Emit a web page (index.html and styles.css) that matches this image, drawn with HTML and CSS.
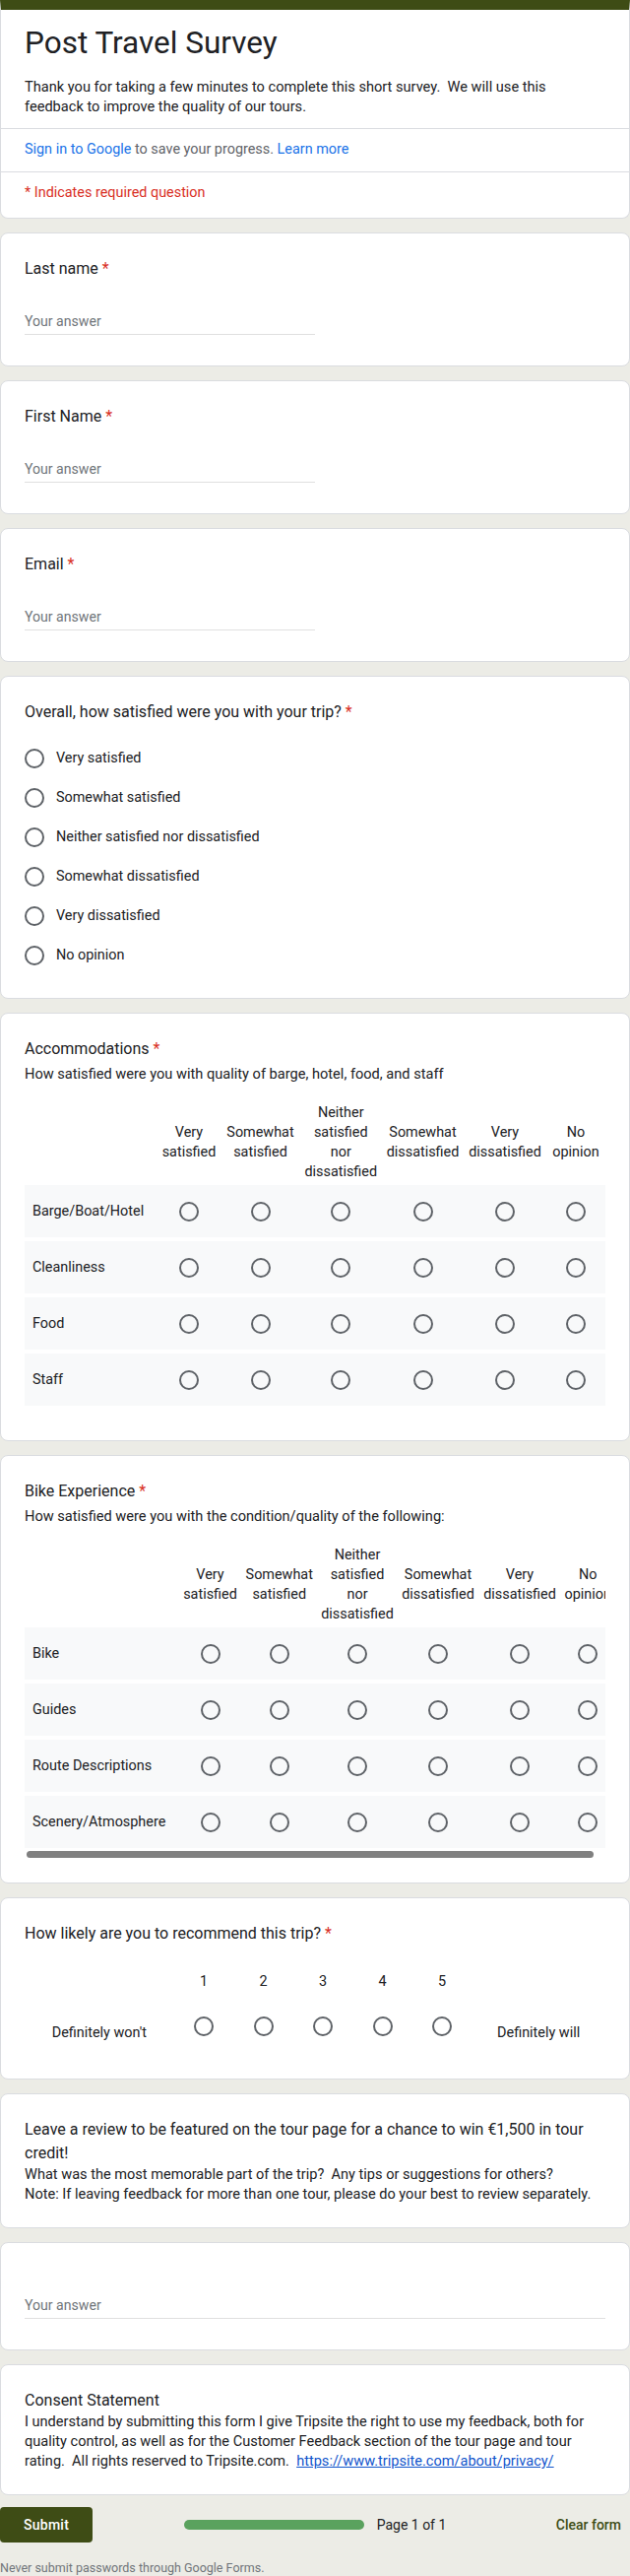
FILE: index.html
```html
<!DOCTYPE html>
<html lang="en">
<head>
<meta charset="utf-8">
<title>Post Travel Survey</title>
<link rel="stylesheet" href="styles.css">
</head>
<body>
<div class="page">

  <div class="card header-card">
    <div class="header-main">
      <h1 class="form-title">Post Travel Survey</h1>
      <div class="form-desc">Thank you for taking a few minutes to complete this short survey.&nbsp; We will use this<br>feedback to improve the quality of our tours.</div>
    </div>
    <div class="header-row signin"><a class="link">Sign in to Google</a> to save your progress. <a class="link">Learn more</a></div>
    <div class="header-row required-note">* Indicates required question</div>
  </div>

  <div class="card">
    <div class="q-title">Last name <span class="req">*</span></div>
    <div class="answer">Your answer</div>
  </div>

  <div class="card">
    <div class="q-title">First Name <span class="req">*</span></div>
    <div class="answer">Your answer</div>
  </div>

  <div class="card">
    <div class="q-title">Email <span class="req">*</span></div>
    <div class="answer">Your answer</div>
  </div>

  <div class="card card-options">
    <div class="q-title">Overall, how satisfied were you with your trip? <span class="req">*</span></div>
    <div class="options">
      <div class="option"><span class="radio"></span><span>Very satisfied</span></div>
      <div class="option"><span class="radio"></span><span>Somewhat satisfied</span></div>
      <div class="option"><span class="radio"></span><span>Neither satisfied nor dissatisfied</span></div>
      <div class="option"><span class="radio"></span><span>Somewhat dissatisfied</span></div>
      <div class="option"><span class="radio"></span><span>Very dissatisfied</span></div>
      <div class="option"><span class="radio"></span><span>No opinion</span></div>
    </div>
  </div>

  <div class="card">
    <div class="q-title">Accommodations <span class="req">*</span></div>
    <div class="q-desc">How satisfied were you with quality of barge, hotel, food, and staff</div>
    <div class="grid-scroll">
      <div class="grid grid-accom">
        <div class="grid-head">
          <div></div>
          <div>Very<br>satisfied</div>
          <div>Somewhat<br>satisfied</div>
          <div>Neither<br>satisfied<br>nor<br>dissatisfied</div>
          <div>Somewhat<br>dissatisfied</div>
          <div>Very<br>dissatisfied</div>
          <div>No<br>opinion</div>
        </div>
        <div class="grid-row"><div class="row-label">Barge/Boat/Hotel</div><div class="cell"><span class="radio"></span></div><div class="cell"><span class="radio"></span></div><div class="cell"><span class="radio"></span></div><div class="cell"><span class="radio"></span></div><div class="cell"><span class="radio"></span></div><div class="cell"><span class="radio"></span></div></div>
        <div class="grid-row"><div class="row-label">Cleanliness</div><div class="cell"><span class="radio"></span></div><div class="cell"><span class="radio"></span></div><div class="cell"><span class="radio"></span></div><div class="cell"><span class="radio"></span></div><div class="cell"><span class="radio"></span></div><div class="cell"><span class="radio"></span></div></div>
        <div class="grid-row"><div class="row-label">Food</div><div class="cell"><span class="radio"></span></div><div class="cell"><span class="radio"></span></div><div class="cell"><span class="radio"></span></div><div class="cell"><span class="radio"></span></div><div class="cell"><span class="radio"></span></div><div class="cell"><span class="radio"></span></div></div>
        <div class="grid-row"><div class="row-label">Staff</div><div class="cell"><span class="radio"></span></div><div class="cell"><span class="radio"></span></div><div class="cell"><span class="radio"></span></div><div class="cell"><span class="radio"></span></div><div class="cell"><span class="radio"></span></div><div class="cell"><span class="radio"></span></div></div>
      </div>
    </div>
    <div class="scrollbar"></div>
  </div>

  <div class="card">
    <div class="q-title">Bike Experience <span class="req">*</span></div>
    <div class="q-desc">How satisfied were you with the condition/quality of the following:</div>
    <div class="grid-scroll">
      <div class="grid grid-bike">
        <div class="grid-head">
          <div></div>
          <div>Very<br>satisfied</div>
          <div>Somewhat<br>satisfied</div>
          <div>Neither<br>satisfied<br>nor<br>dissatisfied</div>
          <div>Somewhat<br>dissatisfied</div>
          <div>Very<br>dissatisfied</div>
          <div>No<br>opinion</div>
        </div>
        <div class="grid-row"><div class="row-label">Bike</div><div class="cell"><span class="radio"></span></div><div class="cell"><span class="radio"></span></div><div class="cell"><span class="radio"></span></div><div class="cell"><span class="radio"></span></div><div class="cell"><span class="radio"></span></div><div class="cell"><span class="radio"></span></div></div>
        <div class="grid-row"><div class="row-label">Guides</div><div class="cell"><span class="radio"></span></div><div class="cell"><span class="radio"></span></div><div class="cell"><span class="radio"></span></div><div class="cell"><span class="radio"></span></div><div class="cell"><span class="radio"></span></div><div class="cell"><span class="radio"></span></div></div>
        <div class="grid-row"><div class="row-label">Route Descriptions</div><div class="cell"><span class="radio"></span></div><div class="cell"><span class="radio"></span></div><div class="cell"><span class="radio"></span></div><div class="cell"><span class="radio"></span></div><div class="cell"><span class="radio"></span></div><div class="cell"><span class="radio"></span></div></div>
        <div class="grid-row"><div class="row-label">Scenery/Atmosphere</div><div class="cell"><span class="radio"></span></div><div class="cell"><span class="radio"></span></div><div class="cell"><span class="radio"></span></div><div class="cell"><span class="radio"></span></div><div class="cell"><span class="radio"></span></div><div class="cell"><span class="radio"></span></div></div>
      </div>
    </div>
    <div class="scrollbar"><div class="scrollbar-thumb"></div></div>
  </div>

  <div class="card">
    <div class="q-title">How likely are you to recommend this trip? <span class="req">*</span></div>
    <div class="scale">
      <div class="scale-end">Definitely won't</div>
      <div class="scale-opt"><div class="scale-num">1</div><div class="scale-radio"><span class="radio"></span></div></div>
      <div class="scale-opt"><div class="scale-num">2</div><div class="scale-radio"><span class="radio"></span></div></div>
      <div class="scale-opt"><div class="scale-num">3</div><div class="scale-radio"><span class="radio"></span></div></div>
      <div class="scale-opt"><div class="scale-num">4</div><div class="scale-radio"><span class="radio"></span></div></div>
      <div class="scale-opt"><div class="scale-num">5</div><div class="scale-radio"><span class="radio"></span></div></div>
      <div class="scale-end">Definitely will</div>
    </div>
  </div>

  <div class="card card-text">
    <div class="q-title">Leave a review to be featured on the tour page for a chance to win €1,500 in tour<br>credit!</div>
    <div class="text-body">What was the most memorable part of the trip?&nbsp; Any tips or suggestions for others?<br>Note: If leaving feedback for more than one tour, please do your best to review separately.</div>
  </div>

  <div class="card">
    <div class="answer answer-long">Your answer</div>
  </div>

  <div class="card card-text card-last">
    <div class="q-title">Consent Statement</div>
    <div class="text-body">I understand by submitting this form I give Tripsite the right to use my feedback, both for<br>quality control, as well as for the Customer Feedback section of the tour page and tour<br>rating.&nbsp; All rights reserved to Tripsite.com.&nbsp; <a class="consent-link">https://www.tripsite.com/about/privacy/</a></div>
  </div>

  <div class="footer">
    <button class="submit" type="button">Submit</button>
    <div class="progress"><div class="progress-bar"></div><span class="progress-text">Page 1 of 1</span></div>
    <div class="clear">Clear form</div>
  </div>
  <div class="disclaimer">Never submit passwords through Google Forms.</div>

</div>
</body>
</html>
```

FILE: styles.css
```css
* { box-sizing: border-box; }
html, body { margin: 0; padding: 0; }
body {
  background: #ecece6;
  font-family: Roboto, "Liberation Sans", Arial, sans-serif;
  color: #202124;
  font-size: 14.4px;
  line-height: 20px;
}
.page { width: 640px; }

.card {
  background: #fff;
  border: 1px solid #dadce0;
  border-radius: 8px;
  padding: 24px;
  margin-bottom: 14px;
}

.header-card {
  padding: 0;
  border-top: 10px solid #3e4c15;
  border-radius: 0 0 8px 8px;
}
.header-main { padding: 14px 24px 12px; }
.form-title {
  margin: 0;
  font-size: 31.5px;
  line-height: 40px;
  font-weight: 400;
}
.form-desc { margin-top: 14px; font-size: 14.6px; }
.header-row {
  border-top: 1px solid #dadce0;
  padding: 11px 24px 12px;
}
.signin { color: #5f6368; }
.link { color: #1a73e8; text-decoration: none; }
.required-note { color: #d93025; padding-bottom: 15px; }

.q-title { font-size: 16px; line-height: 24px; }
.req { color: #d93025; }
.q-desc { margin-top: 3px; font-size: 14.6px; }
.text-body { font-size: 14.55px; line-height: 20px; }

.answer {
  margin-top: 31px;
  margin-bottom: 7px;
  width: 295px;
  padding-bottom: 3px;
  border-bottom: 1px solid #e0e0e0;
  color: #70757a;
  font-size: 14.1px;
}
.answer-long { width: auto; margin-top: 29px; }

.card-options { padding-bottom: 23px; }
.options { margin-top: 15px; }
.option {
  display: flex;
  align-items: center;
  gap: 12px;
  height: 40px;
}
.radio {
  display: block;
  flex: none;
  width: 20px;
  height: 20px;
  border: 2px solid #5f6368;
  border-radius: 50%;
}

.grid-scroll { margin-top: 20px; overflow: hidden; }
.grid-accom { --cols: 134.5px 65px 80px 83.5px 83px 84px 60px; }
.grid-bike { --cols: 157px 63px 77.5px 81px 83px 83px 55.5px; width: 600px; }
.grid-head, .grid-row {
  display: grid;
  grid-template-columns: var(--cols);
  align-items: center;
}
.grid-head {
  height: 83px;
  padding-bottom: 3px;
  text-align: center;
  white-space: nowrap;
}
.grid-row {
  height: 53px;
  margin-top: 4px;
  background: #f8f9fa;
}
.grid-head + .grid-row { margin-top: 0; }
.row-label { padding-left: 8px; white-space: nowrap; }
.cell { display: flex; justify-content: center; }
.scrollbar { margin-top: 3px; height: 8px; }
.scrollbar-thumb {
  margin-left: 2px;
  width: 576px;
  height: 7px;
  border-radius: 4px;
  background: #808080;
}

.scale {
  display: grid;
  grid-template-columns: 151.75px repeat(5, 60.5px) 1fr;
  align-items: end;
  margin-top: 27px;
  text-align: center;
}
.scale-end { padding-bottom: 12px; white-space: nowrap; }
.scale-radio {
  display: flex;
  justify-content: center;
  padding: 25px 0 19px;
}

.card-text { padding-bottom: 23px; }
.card-last { margin-bottom: 12px; }
.consent-link { color: #1155cc; text-decoration: underline; }

.footer {
  display: grid;
  grid-template-columns: 1fr auto 1fr;
  align-items: center;
  height: 36px;
}
.submit {
  justify-self: start;
  height: 36px;
  padding: 0 24px;
  border: 0;
  border-radius: 4px;
  background: #3e4c15;
  color: #fff;
  font-family: Roboto, "Liberation Sans", Arial, sans-serif;
  font-size: 14px;
  font-weight: 500;
  letter-spacing: 0.25px;
}
.progress {
  display: flex;
  align-items: center;
  gap: 13px;
}
.progress-bar {
  width: 183px;
  height: 10px;
  border-radius: 5px;
  background: #5aa25e;
}
.progress-text { font-size: 14px; }
.clear {
  justify-self: end;
  padding: 0 9px;
  color: #3e4c15;
  font-weight: 500;
  font-size: 14px;
}
.disclaimer {
  margin-top: 18px;
  font-size: 12.5px;
  line-height: 16px;
  color: #70757a;
}
```
